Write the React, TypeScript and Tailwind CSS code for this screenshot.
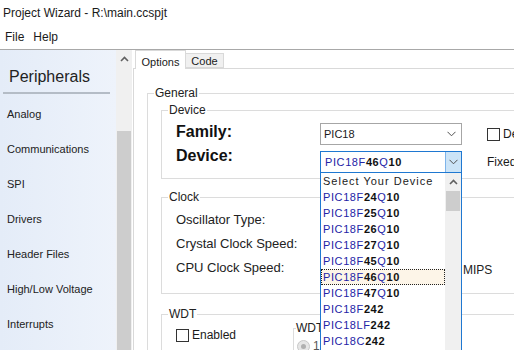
import React from "react";

const peripherals = [
  "Analog",
  "Communications",
  "SPI",
  "Drivers",
  "Header Files",
  "High/Low Voltage",
  "Interrupts",
];

const devices = [
  "PIC18F24Q10",
  "PIC18F25Q10",
  "PIC18F26Q10",
  "PIC18F27Q10",
  "PIC18F45Q10",
  "PIC18F46Q10",
  "PIC18F47Q10",
  "PIC18F242",
  "PIC18LF242",
  "PIC18C242",
  "PIC18F248",
];

const Chevron = () => (
  <svg width="9" height="6" viewBox="0 0 9 6">
    <polyline points="0.5,0.8 4.5,4.8 8.5,0.8" fill="none" stroke="#505050" strokeWidth="1" />
  </svg>
);

const UpArrow = () => (
  <svg width="9" height="6" viewBox="0 0 9 6">
    <polyline points="1,5 4.5,1.5 8,5" fill="none" stroke="#606060" strokeWidth="1.6" />
  </svg>
);

// prefix in blue, digits in bold black, letters after the prefix in blue
const DevName = ({ name }: { name: string }) => {
  const m = name.match(/^(PIC18[A-Z]+)(.*)$/);
  const prefix = m ? m[1] : name;
  const rest = m ? m[2].split(/(\d+)/).filter(Boolean) : [];
  return (
    <span className="tracking-[0.6px]">
      <span className="text-[#2323a6]">{prefix}</span>
      {rest.map((s, i) =>
        /\d/.test(s) ? (
          <span key={i} className="font-bold text-[#111]">
            {s}
          </span>
        ) : (
          <span key={i} className="text-[#2323a6]">
            {s}
          </span>
        )
      )}
    </span>
  );
};

const Legend = ({ children }: { children: React.ReactNode }) => (
  <legend className="ml-[6px] px-[1px] text-[12px] leading-[14px] text-[#222]">{children}</legend>
);

export default function App() {
  return (
    <div className="w-[514px] h-[350px] overflow-hidden bg-white flex flex-col font-['Liberation_Sans',Arial,sans-serif] text-[#1a1a1a]">
      <div className="h-[25px] flex items-center pl-[3px] text-[12px]">Project Wizard - R:\main.ccspjt</div>
      <div className="h-[25px] flex items-center gap-[9px] pl-[5px] text-[12px] border-b border-[#a8a8a8]">
        <span>File</span>
        <span>Help</span>
      </div>

      <div className="flex flex-1 min-h-0">
        {/* left navigation */}
        <div className="w-[116px] shrink-0 bg-gradient-to-r from-[#e4ecf8] to-[#eef3fb] flex flex-col">
          <div className="pt-[17px] pl-[9px] text-[16px] leading-[19px] text-[#222]">Peripherals</div>
          <div className="mt-[6px] ml-[3px] mr-[6px] h-[2px] bg-[#b4bcc6]" />
          <div className="mt-[3px] flex flex-col">
            {peripherals.map((p) => (
              <div key={p} className="h-[35px] flex items-center pl-[7px] text-[11px] text-[#222]">
                {p}
              </div>
            ))}
          </div>
        </div>
        <div className="w-[16px] shrink-0 bg-[#f0f0f0] flex flex-col">
          <div className="h-[17px] flex items-center justify-center">
            <UpArrow />
          </div>
          <div className="h-[64px]" />
          <div className="flex-1 mx-[1px] bg-[#cdcdcd]" />
        </div>

        {/* tab control */}
        <div className="flex-1 min-w-0 ml-[1px] overflow-hidden">
          <div className="w-[430px] flex flex-col">
            <div className="h-[18px] flex items-end pl-[2px] text-[11px]">
              <div className="w-[51px] h-[19px] -mb-px relative z-10 bg-white border border-b-0 border-[#d9d9d9] flex items-start justify-center pt-[3px]">
                Options
              </div>
              <div className="w-[38px] h-[15px] bg-[#f0f0f0] border border-l-0 border-[#d9d9d9] flex items-center justify-center pt-[2px]">
                Code
              </div>
            </div>

            <div className="border-l border-t border-[#d9d9d9] pl-[13px] pt-[17px] h-[300px]">
              <fieldset className="border border-[#dcdcdc] w-[420px]">
                <Legend>General</Legend>
                <div className="pl-[13px] pt-[3px]">
                  {/* Device */}
                  <fieldset className="border border-[#dcdcdc]">
                    <Legend>Device</Legend>
                    <div className="pl-[14px] pt-[6px] pb-[5px] flex flex-col gap-[6px]">
                      <div className="flex items-center h-[22px]">
                        <div className="w-[144px] mb-[4px] text-[16px] font-bold text-[#111]">Family:</div>
                        <div className="w-[142px] h-[22px] border border-[#a6a6a6] flex items-center justify-between pl-[3px] pr-[5px] text-[11px]">
                          <span>PIC18</span>
                          <Chevron />
                        </div>
                        <div className="ml-[25px] flex items-center gap-[3px] text-[12px] whitespace-nowrap">
                          <div className="w-[13px] h-[13px] border border-[#333] bg-white" />
                          <span>Debug Mode</span>
                        </div>
                      </div>
                      <div className="flex items-center h-[22px]">
                        <div className="w-[144px] mb-[12px] text-[16px] font-bold text-[#111]">Device:</div>
                        <div className="w-[142px] h-[22px] relative z-20">
                          <div className="h-full border border-[#1f78d1] flex items-center text-[11px]">
                            <div className="flex-1 pl-[4px]">
                              <DevName name="PIC18F46Q10" />
                            </div>
                            <div className="w-[16px] h-full bg-[#cce4f7] border-l border-[#7eb4ea] flex items-center justify-center">
                              <Chevron />
                            </div>
                          </div>
                          <div className="absolute top-full left-0 w-[142px] h-[200px] bg-white border border-t-0 border-[#1f78d1] flex text-[11px]">
                            <div className="flex-1 flex flex-col">
                              <div className="h-[16px] flex items-center pl-[2px] tracking-[1px] text-[#222]">
                                Select Your Device
                              </div>
                              {devices.map((d) => (
                                <div
                                  key={d}
                                  className={
                                    d === "PIC18F46Q10"
                                      ? "h-[16px] flex items-center pl-[1px] border border-dotted border-[#222] bg-[#fdf5e8]"
                                      : "h-[16px] flex items-center pl-[2px]"
                                  }
                                >
                                  <DevName name={d} />
                                </div>
                              ))}
                            </div>
                            <div className="w-[16px] bg-[#f0f0f0] flex flex-col">
                              <div className="h-[17px] flex items-center justify-center">
                                <UpArrow />
                              </div>
                              <div className="mt-[1px] h-[20px] mx-[1px] bg-[#cdcdcd]" />
                            </div>
                          </div>
                        </div>
                        <div className="ml-[25px] text-[12px]">Fixed</div>
                      </div>
                    </div>
                  </fieldset>

                  {/* Clock */}
                  <fieldset className="mt-[11px] border border-[#dcdcdc]">
                    <Legend>Clock</Legend>
                    <div className="pl-[14px] pt-[4px] pb-[13px] flex flex-col text-[13px] text-[#222]">
                      <div className="h-[24px] flex items-center">Oscillator Type:</div>
                      <div className="h-[24px] flex items-center">Crystal Clock Speed:</div>
                      <div className="h-[24px] flex items-center">
                        <div className="w-[144px]">CPU Clock Speed:</div>
                        <div className="w-[143px]" />
                        <div className="text-[12px] mt-[3px]">MIPS</div>
                      </div>
                    </div>
                  </fieldset>

                  {/* WDT */}
                  <fieldset className="mt-[13px] border border-[#dcdcdc] h-[60px]">
                    <Legend>WDT</Legend>
                    <div className="pl-[14px] flex items-start">
                      <div className="w-[117px] mt-[5px] flex items-center gap-[3px] text-[12px]">
                        <div className="w-[13px] h-[13px] border border-[#333] bg-white" />
                        <span>Enabled</span>
                      </div>
                      <fieldset className="border border-[#dcdcdc] w-[150px] h-[40px]">
                        <legend className="ml-[2px] text-[12px] leading-[14px] text-[#222]">WDT</legend>
                        <div className="pl-[3px] mt-[2px] flex items-center gap-[3px] text-[12px] text-[#555]">
                          <div className="w-[13px] h-[13px] rounded-full border border-[#c8c8c8] bg-[#e6e6e6] flex items-center justify-center">
                            <div className="w-[5px] h-[5px] rounded-full bg-[#b0b0b0]" />
                          </div>
                          <span>1</span>
                        </div>
                      </fieldset>
                    </div>
                  </fieldset>
                </div>
              </fieldset>
            </div>
          </div>
        </div>
      </div>
    </div>
  );
}
